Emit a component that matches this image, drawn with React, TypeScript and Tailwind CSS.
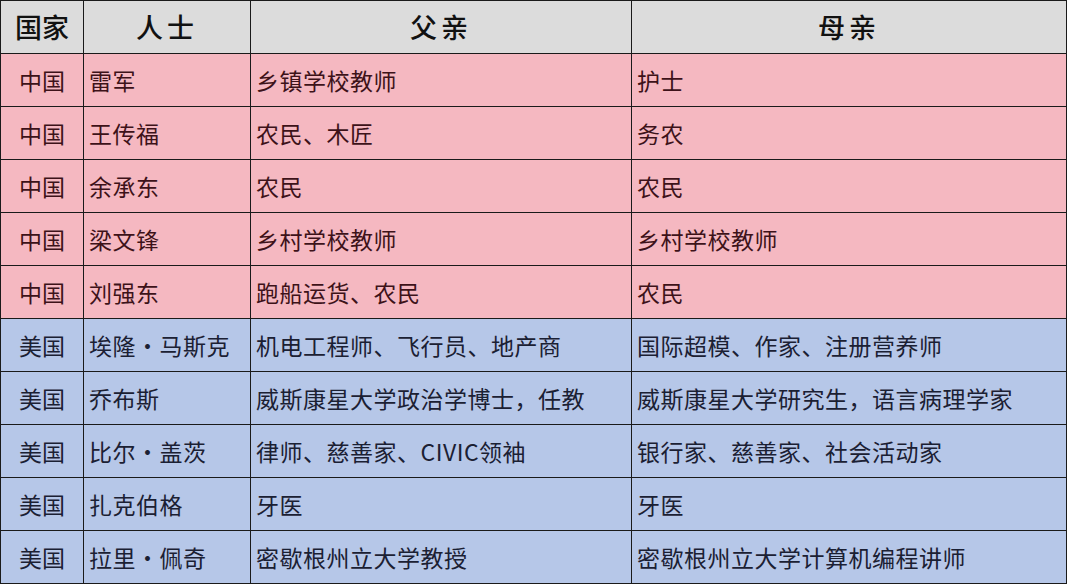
const rows = [
  { country: "中国", name: "雷军", father: "乡镇学校教师", mother: "护士" },
  { country: "中国", name: "王传福", father: "农民、木匠", mother: "务农" },
  { country: "中国", name: "余承东", father: "农民", mother: "农民" },
  { country: "中国", name: "梁文锋", father: "乡村学校教师", mother: "乡村学校教师" },
  { country: "中国", name: "刘强东", father: "跑船运货、农民", mother: "农民" },
  { country: "美国", name: "埃隆·马斯克", father: "机电工程师、飞行员、地产商", mother: "国际超模、作家、注册营养师" },
  { country: "美国", name: "乔布斯", father: "威斯康星大学政治学博士，任教", mother: "威斯康星大学研究生，语言病理学家" },
  { country: "美国", name: "比尔·盖茨", father: "律师、慈善家、CIVIC领袖", mother: "银行家、慈善家、社会活动家" },
  { country: "美国", name: "扎克伯格", father: "牙医", mother: "牙医" },
  { country: "美国", name: "拉里·佩奇", father: "密歇根州立大学教授", mother: "密歇根州立大学计算机编程讲师" },
];

const font = { fontFamily: '"Noto Sans CJK SC", "Noto Sans", sans-serif' };

export default function App() {
  return (
    <div className="w-[1068px] h-[586px] bg-white overflow-hidden" style={font}>
      <table className="table-fixed border-collapse w-[1066px]">
        <colgroup>
          <col className="w-[83px]" />
          <col className="w-[167px]" />
          <col className="w-[381px]" />
          <col className="w-[435px]" />
        </colgroup>
        <thead>
          <tr className="h-[53px] bg-[#dcdcdc] text-[27px] text-[#111]">
            <th className="border border-[#1a1a1a] text-center p-0 font-medium">国家</th>
            <th className="border border-[#1a1a1a] text-center p-0 font-medium tracking-[4px]">人士</th>
            <th className="border border-[#1a1a1a] text-center p-0 font-medium tracking-[4px]">父亲</th>
            <th className="border border-[#1a1a1a] text-center p-0 font-medium tracking-[4px]">母亲</th>
          </tr>
        </thead>
        <tbody>
          {rows.map((r, i) => {
            const cn = r.country === "中国";
            const rowCls = cn
              ? "h-[53px] bg-[#f5b8c1] text-[#3d1219]"
              : "h-[53px] bg-[#b6c7e8] text-[#1b2033]";
            return (
              <tr key={i} className={rowCls}>
                <td className="border border-[#1a1a1a] text-center text-[23px] p-0">{r.country}</td>
                <td className="border border-[#1a1a1a] text-[23px] pl-[5px] tracking-[0.5px] whitespace-nowrap">{r.name}</td>
                <td className="border border-[#1a1a1a] text-[23px] pl-[5px] tracking-[0.5px] whitespace-nowrap">{r.father}</td>
                <td className="border border-[#1a1a1a] text-[23px] pl-[5px] tracking-[0.5px] whitespace-nowrap">{r.mother}</td>
              </tr>
            );
          })}
        </tbody>
      </table>
    </div>
  );
}
